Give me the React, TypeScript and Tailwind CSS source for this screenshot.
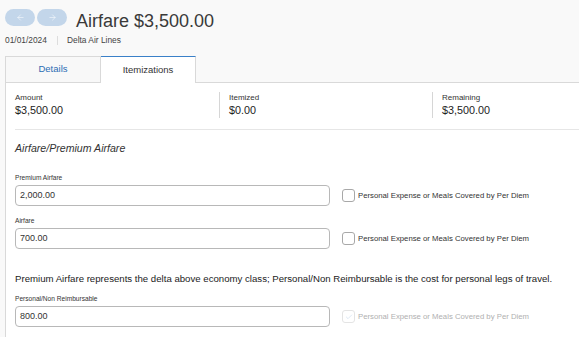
import { ArrowLeft, ArrowRight, Check } from "lucide-react"

type FieldProps = {
  label: string
  value: string
  disabled?: boolean
}

function Field({ label, value, disabled }: FieldProps) {
  return (
    <div className="flex flex-col">
      <div className="h-[9px] text-[6.6px] leading-[9px] text-[#333] mb-[3px]">{label}</div>
      <div className="flex items-center">
        <div className="w-[315px] h-[21px] border border-[#b8b8b8] rounded-[4px] flex items-center px-[4px] text-[9px] text-[#333]">
          {value}
        </div>
        <div className="ml-[12px] flex items-center">
          {disabled ? (
            <span className="w-[13px] h-[13px] rounded-[3px] border border-[#e4e4e4] flex items-center justify-center">
              <Check size={8} strokeWidth={1.5} className="text-[#bcd2ea]" />
            </span>
          ) : (
            <span className="w-[13px] h-[13px] rounded-[3px] border border-[#a8a8a8] bg-white" />
          )}
          <span className={"ml-[3px] text-[7.75px] " + (disabled ? "text-[#b0b0b0]" : "text-[#333]")}>
            Personal Expense or Meals Covered by Per Diem
          </span>
        </div>
      </div>
    </div>
  )
}

function Stat({ label, value, first }: { label: string; value: string; first?: boolean }) {
  return (
    <div className={"w-[213px] h-[26px] pl-[9px] pt-[1px] " + (first ? "" : "border-l border-[#d6d6d6]")}>
      <div className="text-[8px] leading-[10px] text-[#333]">{label}</div>
      <div className="text-[10.8px] leading-[14px] text-[#222]">{value}</div>
    </div>
  )
}

export default function App() {
  return (
    <div className="w-[579px] h-[337px] overflow-hidden bg-[#f9f9f9] font-['Liberation_Sans',Arial,sans-serif]">
      {/* header */}
      <div className="pl-[5px] pt-[9px]">
        <div className="flex items-start">
          <button className="w-[30px] h-[17px] rounded-full bg-[#c3d6ea] flex items-center justify-center">
            <ArrowLeft size={9} strokeWidth={1.4} className="text-white" />
          </button>
          <button className="ml-[2px] w-[30px] h-[17px] rounded-full bg-[#c3d6ea] flex items-center justify-center">
            <ArrowRight size={9} strokeWidth={1.4} className="text-white" />
          </button>
          <h1 className="ml-[9px] text-[18px] leading-[24px] text-[#3a3a3a]">Airfare $3,500.00</h1>
        </div>
        <div className="mt-[2px] flex items-center text-[8.4px] leading-[10px] text-[#444]">
          <span>01/01/2024</span>
          <span className="ml-[10px] w-px h-[9px] bg-[#dddddd]" />
          <span className="ml-[9px]">Delta Air Lines</span>
        </div>
        <div className="mt-[11px] flex h-[27px]">
          <div className="w-[96px] border border-[#d9d9d9] bg-[#f8f8f8] flex items-center justify-center text-[9.5px] text-[#2c6db4]">
            Details
          </div>
          <div className="w-[95px] border-t border-t-[#3a80c8] border-r border-r-[#d9d9d9] bg-white flex items-center justify-center text-[9.5px] text-[#333]">
            Itemizations
          </div>
          <div className="flex-1 border-b border-[#d9d9d9]" />
        </div>
      </div>

      {/* panel */}
      <div className="ml-[5px] w-[700px] h-[260px] border-l border-[#d9d9d9] bg-white">
        <div className="flex pt-[9px]">
          <Stat label="Amount" value="$3,500.00" first />
          <Stat label="Itemized" value="$0.00" />
          <Stat label="Remaining" value="$3,500.00" />
        </div>
        <div className="ml-[9px] mt-[11px] h-px bg-[#e6e6e6]" />
        <div className="px-[9px]">
          <div className="mt-[11px] text-[10.6px] leading-[14px] italic text-[#333]">Airfare/Premium Airfare</div>
          <div className="mt-[18px]">
            <Field label="Premium Airfare" value="2,000.00" />
          </div>
          <div className="mt-[10px]">
            <Field label="Airfare" value="700.00" />
          </div>
          <p className="mt-[24px] mb-[9px] text-[9.65px] leading-[12px] text-[#222]">
            Premium Airfare represents the delta above economy class; Personal/Non Reimbursable is the cost for personal legs of travel.
          </p>
          <Field label="Personal/Non Reimbursable" value="800.00" disabled />
        </div>
      </div>
    </div>
  )
}
